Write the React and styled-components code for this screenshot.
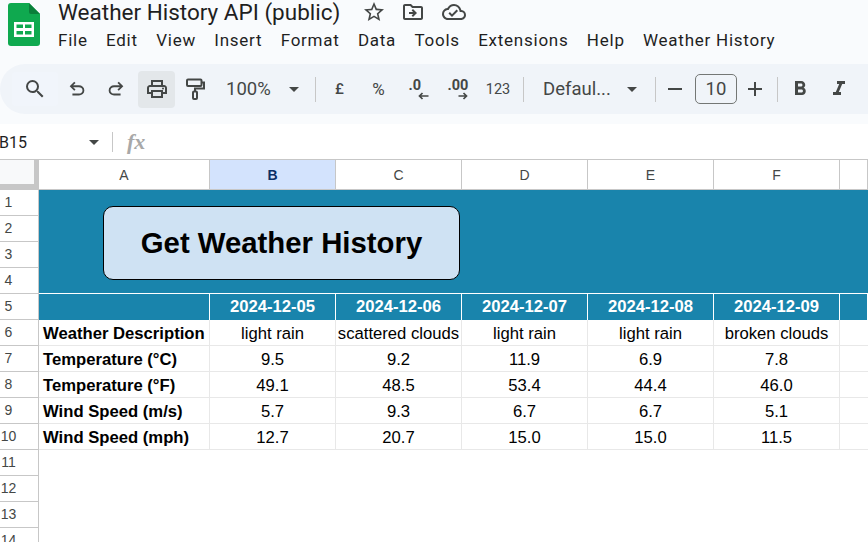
import React from "react";
import styled, { createGlobalStyle } from "styled-components";
import {
  MdSearch,
  MdOutlineLocalPrintshop,
  MdArrowDropDown,
  MdStarBorder,
  MdOutlineDriveFileMove,
  MdOutlineCloudDone,
  MdRemove,
  MdAdd,
  MdFormatBold,
  MdFormatItalic,
} from "react-icons/md";

const GlobalStyle = createGlobalStyle`
  html, body {
    margin: 0;
    padding: 0;
    height: 100%;
    overflow: hidden;
    background: #f9fbfd;
  }
`;

const Page = styled.div`
  width: 868px;
  height: 542px;
  overflow: hidden;
  font-family: Roboto, "Liberation Sans", sans-serif;
`;

const Header = styled.header`
  height: 64px;
  display: flex;
  padding-left: 8px;
  gap: 18px;
`;

const TitleBlock = styled.div`
  display: flex;
  flex-direction: column;
`;

const TitleRow = styled.div`
  height: 24px;
  display: flex;
  align-items: center;
  color: #1f1f1f;
`;

const DocName = styled.div`
  font-size: 22.5px;
  line-height: 24px;
  width: 282px;
  white-space: nowrap;
  color: #1f1f1f;
`;

const TitleIcons = styled.div`
  display: flex;
  align-items: center;
  gap: 15px;
  margin-left: 22px;
  color: #444746;
  font-size: 24px;
  svg { display: block; }
  svg:last-child { margin-left: 2px; }
`;

const MenuBar = styled.nav`
  display: flex;
  gap: 18.35px;
  margin-top: 5px;
  font-size: 17px;
  letter-spacing: 0.75px;
  line-height: 22px;
  color: #1f1f1f;
`;

const Toolbar = styled.div`
  height: 50px;
  background: #f0f4f9;
  border-radius: 25px 0 0 25px;
  display: flex;
  align-items: center;
  padding-left: 12px;
  color: #444746;
`;

const ToolButton = styled.div`
  width: ${(p) => p.$w || 39}px;
  height: 37px;
  margin-left: ${(p) => p.$ml || 0}px;
  display: flex;
  align-items: center;
  justify-content: center;
  flex: none;
  border-radius: 4px;
  font-size: 24px;
  background: ${(p) => (p.$active ? "#e3e7ea" : "transparent")};
  svg { display: block; }
`;

const SearchButton = styled(ToolButton)`
  width: 46px;
  height: 34px;
  background: #f1f5fb;
`;

const Divider = styled.div`
  width: 1px;
  height: 25px;
  background: #c7c7c7;
  flex: none;
  margin: 0 ${(p) => p.$r}px 0 ${(p) => p.$l}px;
`;

const ToolText = styled.span`
  font-size: ${(p) => p.$size || 14}px;
  color: #444746;
  font-weight: ${(p) => p.$weight || 400};
`;

const Dropdown = styled.div`
  display: flex;
  align-items: center;
  justify-content: space-between;
  flex: none;
  box-sizing: border-box;
  width: ${(p) => p.$w}px;
  padding-left: ${(p) => p.$pad}px;
  font-size: 18.5px;
  color: #444746;
  svg { display: block; font-size: 24px; }
`;

const SizeBox = styled.div`
  width: 42px;
  height: 30px;
  margin-left: 3px;
  box-sizing: border-box;
  border: 1px solid #747775;
  border-radius: 5px;
  display: flex;
  align-items: center;
  justify-content: center;
  font-size: 18.5px;
  flex: none;
  color: #444746;
`;

const FormulaBar = styled.div`
  margin-top: 10px;
  height: 36px;
  background: #fff;
  display: flex;
  align-items: center;
`;

const NameBox = styled.div`
  width: 113px;
  box-sizing: border-box;
  padding-right: 6px;
  display: flex;
  align-items: center;
  justify-content: space-between;
  font-family: Roboto, sans-serif;
  font-size: 16px;
  color: #1f1f1f;
  margin-left: -1px;
  svg { display: block; font-size: 24px; color: #444746; }
`;

const FormulaDivider = styled.div`
  width: 1px;
  height: 20px;
  background: #c7c7c7;
`;

const FxMark = styled.span`
  margin-left: 14px;
  font-family: "Liberation Serif", serif;
  font-style: italic;
  font-weight: 700;
  font-size: 22px;
  color: #a8a8a8;
`;

const Sheet = styled.div`
  display: grid;
  grid-template-columns: 39px 171px repeat(5, 126px) 1fr;
  grid-template-rows: 30px repeat(15, 26px);
  background: #fff;
  font-family: "Liberation Sans", sans-serif;
  border-top: 1px solid #c7c7c7;
  margin-top: -1px;
`;

const Corner = styled.div`
  box-sizing: border-box;
  background: #f8f9fa;
  border-right: 5px solid #c7c7c7;
  border-bottom: 6px solid #c7c7c7;
`;

const ColHead = styled.div`
  box-sizing: border-box;
  display: flex;
  align-items: center;
  justify-content: center;
  font-size: 14px;
  color: ${(p) => (p.$active ? "#0b2f66" : "#444746")};
  font-weight: ${(p) => (p.$active ? 700 : 400)};
  background: ${(p) => (p.$active ? "#d3e3fd" : "#fff")};
  border-right: 1px solid #c7c7c7;
  border-bottom: 1px solid #c7c7c7;
  &:last-child { border-right: none; }
`;

const RowHead = styled.div`
  box-sizing: border-box;
  grid-column: 1;
  display: flex;
  align-items: center;
  justify-content: center;
  padding: 0 21px 2px 0;
  font-size: 14px;
  color: #444746;
  border-right: 1px solid #c7c7c7;
  border-bottom: 1px solid #c7c7c7;
`;

const Banner = styled.div`
  grid-column: 2 / -1;
  grid-row: 2 / 6;
  box-sizing: border-box;
  background: #1984ac;
  padding: 16px 0 0 64px;
`;

const RunButton = styled.div`
  width: 357px;
  height: 74px;
  box-sizing: border-box;
  background: #cfe2f3;
  border: 1px solid #000;
  border-radius: 10px;
  display: flex;
  align-items: center;
  justify-content: center;
  font-size: 29.33px;
  font-weight: 700;
  color: #000;
`;

const DateCell = styled.div`
  box-sizing: border-box;
  display: flex;
  align-items: center;
  justify-content: center;
  background: #1984ac;
  color: #fff;
  font-size: 16.67px;
  font-weight: 700;
  margin-top: -1px;
  border-top: 1px solid #fff;
  border-right: 1px solid #fff;
  &:last-of-type { border-right: none; }
`;

const DataCell = styled.div`
  box-sizing: border-box;
  display: flex;
  align-items: center;
  justify-content: ${(p) => (p.$label ? "flex-start" : "center")};
  padding: 2px 0 0 ${(p) => (p.$label ? 4 : 0)}px;
  font-size: 16.67px;
  font-weight: ${(p) => (p.$label ? 700 : 400)};
  color: #000;
  white-space: nowrap;
  border-right: ${(p) => (p.$open ? "none" : "1px solid #e8e8e8")};
  border-bottom: 1px solid #e8e8e8;
`;

const menus = ["File", "Edit", "View", "Insert", "Format", "Data", "Tools", "Extensions", "Help", "Weather History"];
const columns = ["A", "B", "C", "D", "E", "F", ""];
const dates = ["", "2024-12-05", "2024-12-06", "2024-12-07", "2024-12-08", "2024-12-09", ""];
const rows = [
  ["Weather Description", "light rain", "scattered clouds", "light rain", "light rain", "broken clouds"],
  ["Temperature (°C)", "9.5", "9.2", "11.9", "6.9", "7.8"],
  ["Temperature (°F)", "49.1", "48.5", "53.4", "44.4", "46.0"],
  ["Wind Speed (m/s)", "5.7", "9.3", "6.7", "6.7", "5.1"],
  ["Wind Speed (mph)", "12.7", "20.7", "15.0", "15.0", "11.5"],
];

function SheetsLogo() {
  return (
    <svg width="32" height="43" viewBox="0 0 32 43" style={{ marginTop: 3, flex: "none" }}>
      <path d="M3 0h18l11 11v29a3 3 0 0 1-3 3H3a3 3 0 0 1-3-3V3a3 3 0 0 1 3-3z" fill="#0fa94f" />
      <path d="M21 0l11 11H23a2 2 0 0 1-2-2z" fill="#0a7f3a" />
      <path d="M6 19h20v15H6z M8.500 21.500v3.500h6.500v-3.500z M17 21.500v3.500h6.500v-3.500z M8.500 28v3.500h6.500V28z M17 28v3.500h6.500V28z" fill="#fff" fillRule="evenodd" />
    </svg>
  );
}

function UndoIcon({ flip }) {
  return (
    <svg width="22" height="22" viewBox="0 0 24 24" fill="#444746" style={flip ? { transform: "scaleX(-1)" } : undefined}>
      <path d="M7 19v-2h7.100q1.600 0 2.750-1t1.150-2.500q0-1.500-1.150-2.500T14.100 10H7.800l2.600 2.600L9 14 4 9l5-5 1.400 1.400L7.800 8h6.300q2.400 0 4.150 1.575T20 13.500q0 2.350-1.750 3.925T14.100 19H7z" />
    </svg>
  );
}

function PaintIcon() {
  return (
    <svg width="24" height="24" viewBox="0 0 24 24" fill="none" stroke="#444746" strokeWidth="2">
      <rect x="4" y="2.500" width="14.500" height="6.500" rx="1" />
      <path d="M18.500 5.500h2.500v6h-9v3" />
      <rect x="10" y="14.500" width="4" height="7.500" rx="1" />
    </svg>
  );
}

function DecimalIcon({ more }) {
  return (
    <svg width="30" height="26" viewBox="0 0 30 26">
      <text x={more ? 4.5 : 5.5} y="14" fontFamily="Roboto, sans-serif" fontWeight="700" fontSize="14.500" fill="#444746">
        {more ? ".00" : ".0"}
      </text>
      {more ? (
        <path d="M15.500 20h8M20.500 17l3 3-3 3" fill="none" stroke="#444746" strokeWidth="1.700" />
      ) : (
        <path d="M25.500 20h-9M19.500 17l-3 3 3 3" fill="none" stroke="#444746" strokeWidth="1.700" />
      )}
    </svg>
  );
}

export default function App() {
  return (
    <Page>
      <GlobalStyle />
      <Header>
        <SheetsLogo />
        <TitleBlock>
          <TitleRow>
            <DocName>Weather History API (public)</DocName>
            <TitleIcons>
              <MdStarBorder />
              <MdOutlineDriveFileMove />
              <MdOutlineCloudDone />
            </TitleIcons>
          </TitleRow>
          <MenuBar>
            {menus.map((m) => (
              <span key={m}>{m}</span>
            ))}
          </MenuBar>
        </TitleBlock>
      </Header>

      <Toolbar>
        <SearchButton><MdSearch /></SearchButton>
        <ToolButton $w={38}><UndoIcon /></ToolButton>
        <ToolButton $w={40}><UndoIcon flip /></ToolButton>
        <ToolButton $w={37} $ml={2} $active><MdOutlineLocalPrintshop /></ToolButton>
        <ToolButton $w={39}><PaintIcon /></ToolButton>
        <Dropdown $w={92} $pad={12}>
          <span>100%</span>
          <MdArrowDropDown />
        </Dropdown>
        <Divider $l={9} $r={4} />
        <ToolButton $w={39}><ToolText $size={15} $weight={500}>£</ToolText></ToolButton>
        <ToolButton $w={39}><ToolText $size={17}>%</ToolText></ToolButton>
        <ToolButton $w={40}><DecimalIcon /></ToolButton>
        <ToolButton $w={40}><DecimalIcon more /></ToolButton>
        <ToolButton $w={40}><ToolText $size={14.500}>123</ToolText></ToolButton>
        <Divider $l={5} $r={6} />
        <Dropdown $w={114} $pad={13}>
          <span>Defaul...</span>
          <MdArrowDropDown />
        </Dropdown>
        <Divider $l={11} $r={2} />
        <ToolButton $w={34}><MdRemove /></ToolButton>
        <SizeBox>10</SizeBox>
        <ToolButton $w={36}><MdAdd /></ToolButton>
        <Divider $l={4} $r={2} />
        <ToolButton $w={39}><MdFormatBold /></ToolButton>
        <ToolButton $w={39}><MdFormatItalic /></ToolButton>
      </Toolbar>

      <FormulaBar>
        <NameBox>
          <span>B15</span>
          <MdArrowDropDown />
        </NameBox>
        <FormulaDivider />
        <FxMark>fx</FxMark>
      </FormulaBar>

      <Sheet>
        <Corner />
        {columns.map((c, i) => (
          <ColHead key={i} $active={c === "B"}>{c}</ColHead>
        ))}
        {Array.from({ length: 15 }, (_, i) => (
          <RowHead key={i} style={{ gridRow: i + 2 }}>{i + 1}</RowHead>
        ))}
        <Banner>
          <RunButton>Get Weather History</RunButton>
        </Banner>
        {dates.map((d, i) => (
          <DateCell key={i}>{d}</DateCell>
        ))}
        {rows.map((r) => (
          <React.Fragment key={r[0]}>
            <DataCell $label>{r[0]}</DataCell>
            {r.slice(1).map((v, i) => (
              <DataCell key={i}>{v}</DataCell>
            ))}
            <DataCell $open />
          </React.Fragment>
        ))}
      </Sheet>
    </Page>
  );
}
